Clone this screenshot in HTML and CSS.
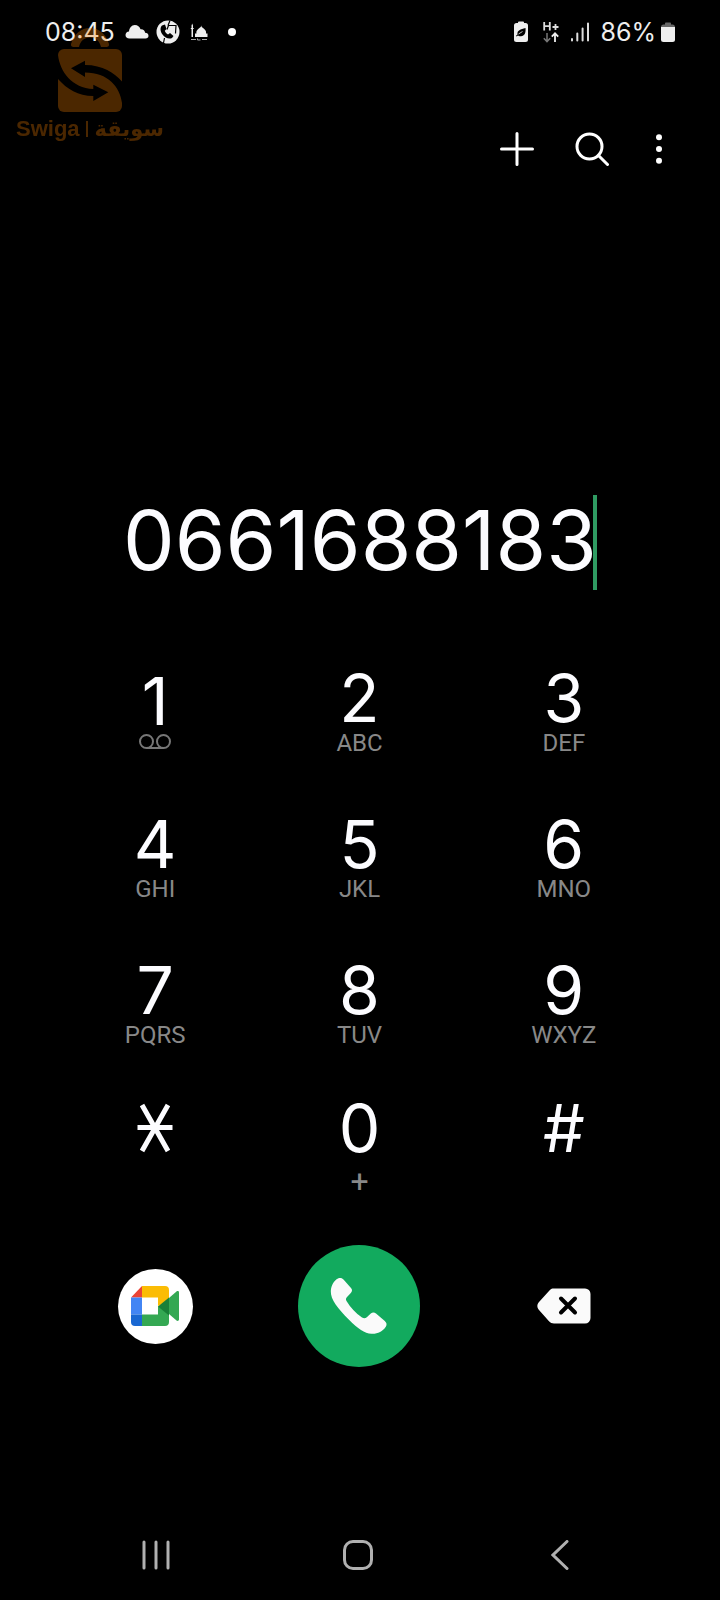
FILE: index.html
```html
<!DOCTYPE html>
<html lang="en">
<head>
    <meta charset="UTF-8">
    <meta name="viewport" content="width=device-width, initial-scale=1.0">
    <title>Phone</title>
    <link rel="stylesheet" href="styles.css">
</head>
<body>
    <header class="status-bar">
        <span class="status-text">08:45</span>
        <svg class="cloud" width="24" height="16" viewBox="0 0 24 16" fill="#eee">
            <path d="M4.500 14.500C2 14.500.5 13 .5 11c0-2 1.500-3.300 3.500-3.500C4.300 4 6.500 1 9.800 1c2.800 0 5 1.800 5.700 4.300 2.700-.3 4.300 1.200 4.600 3.500 2 .1 3.400 1.200 3.400 2.900 0 1.700-1.200 2.800-3 2.800z"/>
        </svg>
        <svg class="call-badge" width="24" height="24" viewBox="0 0 24 24">
            <circle cx="12" cy="12" r="11.500" fill="#eee"/>
            <path d="M6 5.500c-2 2-2 5.500.5 9s6.500 5 9.500 3.500l1.500-2-3.500-3-2 1.500c-1.500-.7-2.600-2-3.200-3.700L10.500 9 9 4.500z" fill="#000"/>
            <path d="M12.500 5.500 20 5.500l-.5 8M12.500 5.500l-1.500 4M14 .5l-2 5M8.500 18l-1 5" fill="none" stroke="#000" stroke-width="1.200"/>
        </svg>
        <svg class="mosque" width="18" height="18" viewBox="0 0 18 18" fill="#eee">
            <path d="M1.500 14V6h-.7V5h.7V2.500L2.200.5 3 2.500V5h.7v1H3v8zM5 14v-3.500h1.500C5.800 7.500 8 6 10.700 4l.5-1.500.5 1.500c2.800 2 5 3.500 4.300 6.500h1.500V14z"/>
            <path d="M1 16.500h5M7.500 15.500v1.500h3M12 16.500h5" fill="none" stroke="#aaa"/>
        </svg>
        <span class="more-dot"></span>
        <div class="status-right">
            <svg width="14" height="22" viewBox="0 0 14 22">
                <path d="M4 1.500a1 1 0 0 1 1-1h4a1 1 0 0 1 1 1V2h1.500A2.500 2.500 0 0 1 14 4.500v14a2.500 2.500 0 0 1-2.500 2.500h-9A2.500 2.500 0 0 1 0 18.500v-14A2.500 2.500 0 0 1 2.500 2H4z" fill="#eee"/>
                <path d="M11.500 7c.5 5-1 8-4.500 8.300-1.500.1-2.500-.3-3-.8l-1.500 1-.5-.7 1.500-1.200C3 9 6.500 8.500 11.500 7z" fill="#000"/>
                <path d="M4.500 13 8.500 10.500" stroke="#eee" stroke-width=".8"/>
            </svg>
            <svg class="network" width="16" height="22" viewBox="0 0 16 22" fill="none">
                <path d="M1.200 1v8.500M6.800 1v8.500M1.200 5.200h5.600M12.500 3v6M9.500 6h6" stroke="#ddd" stroke-width="1.800"/>
                <path d="M4 12v8.500M.8 17.300 4 20.600l3.200-3.300" stroke="#777" stroke-width="1.500"/>
                <path d="M12 21v-8.500M8.800 15.600 12 12.300l3.200 3.300" stroke="#eee" stroke-width="1.800"/>
            </svg>
            <svg width="18" height="20" viewBox="0 0 18 20" stroke="#ddd" stroke-width="2" stroke-linecap="round">
                <path d="M1 17v1.500M6.300 11.500v7M11.600 6.500v12M17 1.500v17"/>
            </svg>
            <span class="status-text percent">86%</span>
            <svg width="14" height="20" viewBox="0 0 14 20">
                <path d="M0 5c0-1.500 1-2.500 2.500-2.500H4V1.500C4 1 4.500.5 5 .5h4c.5 0 1 .5 1 1v1h1.500C13 2.500 14 3.500 14 5z" fill="#666"/>
                <path d="M0 5h14v12.500a2.500 2.500 0 0 1-2.500 2.500h-9A2.500 2.500 0 0 1 0 17.500z" fill="#eee"/>
            </svg>
        </div>
    </header>

    <div class="watermark">
        <svg width="64" height="86" viewBox="0 0 64 86" fill="#f98000">
            <mask id="arrows">
                <rect width="64" height="86" fill="#fff"/>
                <path d="M13 41.300 27 33.700V38c18 0 29 8 37 16.500V76C62 60 50 45.500 27 45.500V50z" fill="#000"/>
                <path d="M50.300 65.300 35.300 57.700V62C14 61 2 45 0 28v24c9 10 20 17 35.300 17v5z" fill="#000"/>
            </mask>
            <path d="M13 17C16 7 23 1 32 1s16 6 19 16c.5 2-1 3-2.500 3H43c-1.500-6-5-9.500-11-9.500S22.500 14 21 20h-5.500c-1.500 0-3-1-2.500-3z"/>
            <rect y="22" width="64" height="63" rx="6" mask="url(#arrows)"/>
        </svg>
        <div class="watermark-name"><span>Swiga</span><i></i><span lang="ar" class="arabic">سويقة</span></div>
    </div>

    <nav class="toolbar">
        <button type="button" aria-label="Add to contacts">
            <svg width="34" height="34" viewBox="0 0 34 34"><path d="M17 1.500v31M1.500 17h31"/></svg>
        </button>
        <button type="button" aria-label="Search">
            <svg width="34" height="34" viewBox="0 0 34 34"><circle cx="14.500" cy="14.500" r="12.500"/><path d="M23.500 23.500 32.500 32.500"/></svg>
        </button>
        <button type="button" aria-label="More options">
            <svg width="6" height="30" viewBox="0 0 6 30" class="dots"><circle cx="3" cy="3.300" r="3"/><circle cx="3" cy="15" r="3"/><circle cx="3" cy="26.700" r="3"/></svg>
        </button>
    </nav>

    <main>
        <div class="number">
            <input type="tel" value="0661688183" aria-label="Phone number">
            <span class="caret"></span>
        </div>

        <div class="keypad">
            <button type="button" class="key voicemail"><span class="digit">1</span>
                <svg width="32" height="16" viewBox="0 0 32 16"><circle cx="7.500" cy="7.500" r="6.500"/><circle cx="24.500" cy="7.500" r="6.500"/><path d="M7.500 14h17"/></svg>
            </button>
            <button type="button" class="key"><span class="digit">2</span><span class="letters">ABC</span></button>
            <button type="button" class="key"><span class="digit">3</span><span class="letters">DEF</span></button>
            <button type="button" class="key"><span class="digit">4</span><span class="letters">GHI</span></button>
            <button type="button" class="key"><span class="digit">5</span><span class="letters">JKL</span></button>
            <button type="button" class="key"><span class="digit">6</span><span class="letters">MNO</span></button>
            <button type="button" class="key"><span class="digit">7</span><span class="letters">PQRS</span></button>
            <button type="button" class="key"><span class="digit">8</span><span class="letters">TUV</span></button>
            <button type="button" class="key"><span class="digit">9</span><span class="letters">WXYZ</span></button>
            <button type="button" class="key last" aria-label="Star">
                <svg class="star" width="36" height="60" viewBox="0 0 36 60"><path d="M.5 29.500h35M5 7l26 46M31 7 5 53"/></svg>
            </button>
            <button type="button" class="key last"><span class="digit">0</span><span class="letters plus">+</span></button>
            <button type="button" class="key last"><span class="digit">#</span></button>
        </div>

        <div class="actions">
            <button type="button" class="meet" aria-label="Video call">
                <svg width="48" height="40" viewBox="0 0 48 40">
                    <path d="M11 0v11.500H0z" fill="#ea4335"/>
                    <path d="M11 0h23a4 4 0 0 1 4 4v11l-11 5v-8.500H11z" fill="#fbbc04"/>
                    <path d="M0 11.500h11v17H0z" fill="#4285f4"/>
                    <path d="M0 28.500h11V40H4a4 4 0 0 1-4-4z" fill="#1967d2"/>
                    <path d="M11 28.500h16V20l11 5v11a4 4 0 0 1-4 4H11z" fill="#34a853"/>
                    <path d="M38 12l7.500-6.500c1-.8 2.500-.3 2.500 1v27c0 1.300-1.500 1.800-2.500 1L38 28z" fill="#34a853"/>
                    <path d="M27 20.500 38 11.500v18z" fill="#188038"/>
                </svg>
            </button>
            <button type="button" class="call" aria-label="Call">
                <svg width="58" height="58" viewBox="0 0 58 58" fill="#fafafa">
                    <path d="M.8 14C1.300 8 4 3.500 8 1.500c2.200-1 4.200-.4 5.700 1.300l7.300 8.200c1.500 1.800 1.300 3.400-.2 5l-4 4.200c-1 1.200-1.100 2.300-.3 3.700 4 6.500 9 12 15.500 16.500 1.700 1.100 3.400 1 4.800-.2l4-3.700c1.700-1.500 3.500-1.500 5.200 0l8.800 7.500c2 1.800 2.300 3.800 1 5.800-3.300 5-8.300 7.300-14.300 7-7-.5-13.500-4.800-22.500-14C8 31.500.5 23 .8 14z"/>
                </svg>
            </button>
            <button type="button" class="erase" aria-label="Backspace">
                <svg width="54" height="36" viewBox="0 0 54 36">
                    <path d="M15.500.5H48a5.500 5.500 0 0 1 5.500 5.500v24a5.500 5.500 0 0 1-5.500 5.500H17c-2 0-3.500-.7-5-2.200L2 22c-2.200-2.600-2.200-5.300 0-8L12 3c1.300-1.500 2.500-2.500 3.500-2.500z" fill="#fafafa"/>
                    <path d="M24 10.500 38 24.500M38 10.500 24 24.500" stroke="#000" stroke-width="4" stroke-linecap="round"/>
                </svg>
            </button>
        </div>
    </main>

    <footer class="nav-bar">
        <button type="button" aria-label="Recent apps">
            <svg width="28" height="30" viewBox="0 0 28 30"><path d="M2 2v26M14 2v26M26 2v26"/></svg>
        </button>
        <button type="button" aria-label="Home">
            <svg width="30" height="30" viewBox="0 0 30 30"><rect x="1.500" y="1.500" width="27" height="27" rx="8.500"/></svg>
        </button>
        <button type="button" aria-label="Back">
            <svg width="18" height="30" viewBox="0 0 18 30"><path d="M16 1.500 2 15l14 13.500"/></svg>
        </button>
    </footer>
</body>
</html>
```
FILE: styles.css
```css
* {
    box-sizing: border-box;
}
body {
    margin: 0;
    min-height: 100vh;
    display: flex;
    flex-direction: column;
    position: relative;
    background-color: #000;
    color: #fcfcff;
    font-family: Inter, Roboto, sans-serif;
}
button {
    padding: 0;
    border: none;
    background: none;
    color: inherit;
    font-family: inherit;
    cursor: pointer;
}
svg {
    display: block;
    flex-shrink: 0;
}
.status-bar {
    display: flex;
    align-items: center;
    height: 63px;
    padding: 0 45px;
}
.status-text {
    font-size: 25px;
    line-height: 32px;
    color: #eee;
}
.cloud {
    margin-left: 10px;
}
.call-badge {
    margin-left: 7px;
}
.mosque {
    margin-left: 10px;
}
.more-dot {
    width: 8px;
    height: 8px;
    margin-left: 20px;
    border-radius: 50%;
    background-color: #fff;
}
.status-right {
    display: flex;
    align-items: center;
    margin-left: auto;
}
.network {
    margin: 0 12px 0 15px;
}
.percent {
    margin: 0 5px 0 11px;
}
.watermark {
    position: absolute;
    top: 27px;
    left: 16px;
    width: 148px;
    opacity: 0.3;
    color: #f98000;
    pointer-events: none;
}
.watermark svg {
    margin-left: 42px;
}
.watermark-name {
    display: flex;
    align-items: center;
    justify-content: space-between;
    height: 28px;
    margin-top: 2px;
    font: bold 22px/28px "Liberation Sans", sans-serif;
}
.watermark-name i {
    width: 2px;
    height: 16px;
    background-color: #f98000;
}
.arabic {
    font-family: "DejaVu Sans", sans-serif;
    font-size: 21px;
}
.toolbar {
    display: flex;
    align-items: center;
    justify-content: flex-end;
    gap: 41px;
    height: 172px;
    margin-bottom: auto;
    padding-right: 58px;
}
.toolbar svg {
    fill: none;
    stroke: #fff;
    stroke-width: 3;
    stroke-linecap: round;
}
.toolbar .dots {
    margin-left: 6px;
    fill: #fff;
    stroke: none;
}
.number {
    display: flex;
    align-items: center;
    justify-content: center;
    height: 96px;
    margin-bottom: 49px;
}
.number input {
    width: 470px;
    height: 96px;
    padding: 0 0 4px;
    border: none;
    outline: none;
    background: none;
    color: inherit;
    font-family: inherit;
    font-size: 82px;
    text-align: right;
}
.caret {
    width: 4px;
    height: 95px;
    background-color: #2f9b62;
}
.keypad,
.actions {
    display: grid;
    grid-template-columns: repeat(3, 1fr);
    padding: 0 54px 0 53px;
}
.key {
    display: flex;
    flex-direction: column;
    align-items: center;
    height: 146px;
    padding-top: 29px;
}
.digit {
    font-size: 66px;
    line-height: 60px;
}
.letters {
    color: #888;
    font-family: Roboto, sans-serif;
    font-size: 24px;
    line-height: 30px;
}
.voicemail .digit {
    padding-top: 3px;
}
.voicemail svg {
    margin-top: 3px;
    fill: none;
    stroke: #777;
    stroke-width: 2;
}
.last {
    padding-top: 21px;
}
.star {
    stroke: #fcfcff;
    stroke-width: 5;
}
.plus {
    margin-top: 8px;
    font-size: 32px;
}
.actions {
    height: 166px;
    align-items: center;
    justify-items: center;
}
.meet,
.call {
    display: flex;
    align-items: center;
    justify-content: center;
    border-radius: 50%;
}
.meet {
    width: 75px;
    height: 75px;
    background-color: #fff;
}
.call {
    width: 122px;
    height: 122px;
    background-color: #12aa5e;
}
.nav-bar {
    display: flex;
    align-items: center;
    justify-content: space-between;
    height: 90px;
    margin-top: 121px;
    padding: 0 140px 0 136px;
}
.nav-bar button {
    display: flex;
    justify-content: center;
    width: 40px;
}
.nav-bar svg {
    fill: none;
    stroke: #b0b0b0;
    stroke-width: 3;
    stroke-linecap: round;
}
```
